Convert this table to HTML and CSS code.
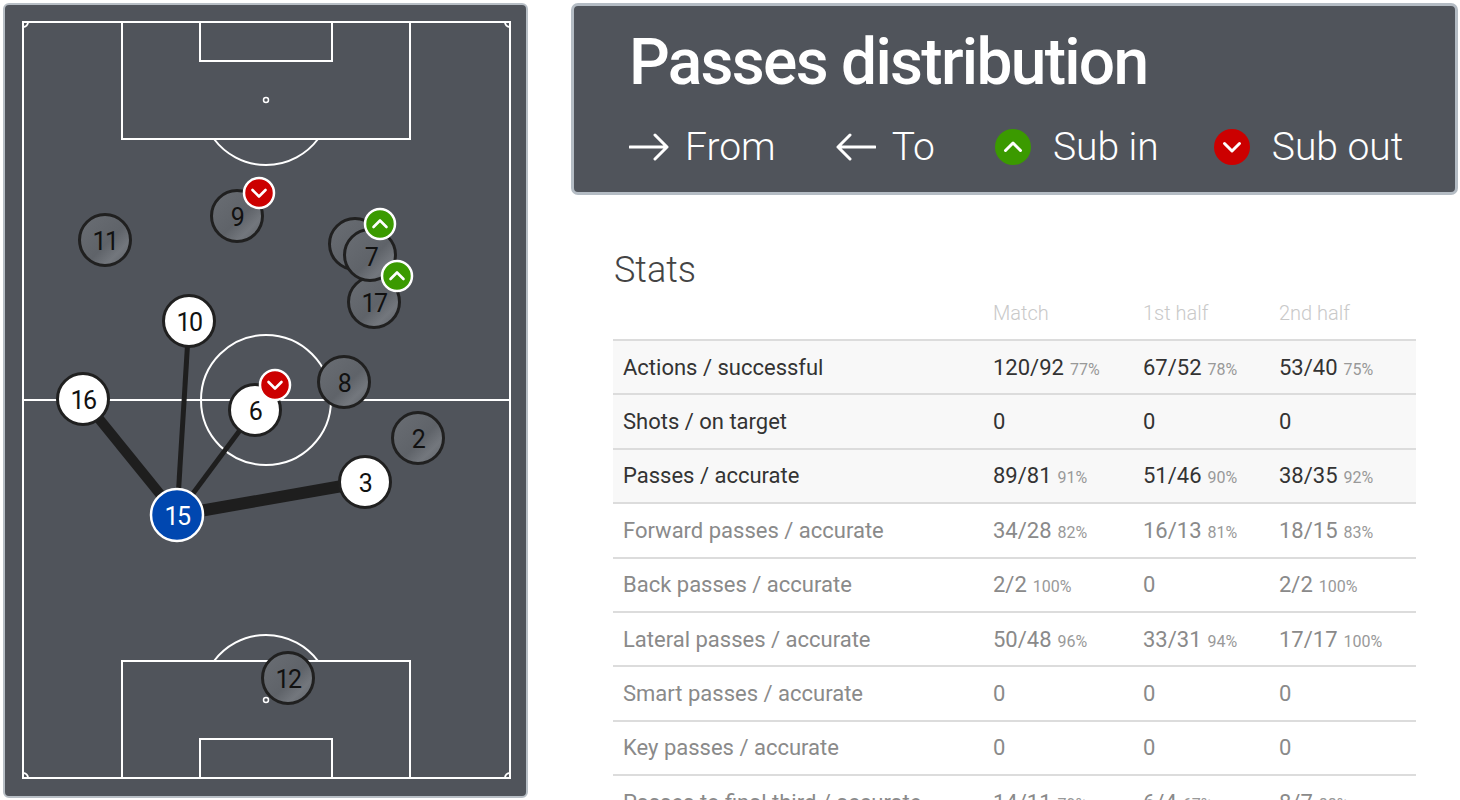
FILE: index.html
```html
<!DOCTYPE html>
<html lang="en">
<head>
<meta charset="utf-8">
<title>Passes distribution</title>
<link rel="stylesheet" href="styles.css">
</head>
<body>
<div class="page">
  <div class="pitch-panel">
    <svg class="pitch" width="521" height="791" viewBox="5 5 521 791" xmlns="http://www.w3.org/2000/svg">
      <defs>
        <linearGradient id="grayfill" x1="0" y1="0" x2="1" y2="1">
          <stop offset="0" stop-color="#6a6e74"/>
          <stop offset="0.55" stop-color="#5f6369"/>
          <stop offset="0.75" stop-color="#73777d"/>
          <stop offset="1" stop-color="#5c6066"/>
        </linearGradient>
      </defs>
      <g class="lines">
        <rect x="23" y="22" width="487" height="756"/>
        <line x1="23" y1="400" x2="510" y2="400"/>
        <circle cx="266" cy="400" r="65"/>
        <rect x="122" y="22" width="288" height="117"/>
        <rect x="200" y="22" width="132" height="39"/>
        <path d="M214 139 A65 65 0 0 0 318 139"/>
        <circle class="spot" cx="266" cy="100" r="2.5"/>
        <rect x="122" y="661" width="288" height="117"/>
        <rect x="200" y="739" width="132" height="39"/>
        <path d="M214 661 A65 65 0 0 1 318 661"/>
        <circle class="spot" cx="266" cy="700" r="2.5"/>
        <path d="M23 27 A5 5 0 0 0 28 22"/>
        <path d="M505 22 A5 5 0 0 0 510 27"/>
        <path d="M23 773 A5 5 0 0 1 28 778"/>
        <path d="M505 778 A5 5 0 0 1 510 773"/>
      </g>
      <g class="passes">
        <line x1="177" y1="515" x2="83" y2="399" stroke-width="10"/>
        <line x1="177" y1="515" x2="189" y2="321" stroke-width="5"/>
        <line x1="177" y1="515" x2="255" y2="410" stroke-width="5"/>
        <line x1="177" y1="515" x2="365" y2="482" stroke-width="12"/>
      </g>
      <g class="node gray"><circle cx="105" cy="240" r="25.5"/><text x="105" y="241">11</text></g>
      <g class="node gray"><circle cx="237" cy="216" r="25.5"/><text x="237" y="217">9</text></g>
      <g class="node gray"><circle cx="355" cy="244" r="25.5"/></g>
      <g class="node gray"><circle cx="374" cy="302" r="25.5"/><text x="374" y="303">17</text></g>
      <g class="node gray"><circle cx="370" cy="255" r="25.5"/><text x="371" y="257">7</text></g>
      <g class="node gray"><circle cx="344" cy="382" r="25.5"/><text x="344" y="383">8</text></g>
      <g class="node gray"><circle cx="418" cy="438" r="25.5"/><text x="418" y="439">2</text></g>
      <g class="node gray"><circle cx="288" cy="678" r="25.5"/><text x="288" y="679">12</text></g>
      <g class="node white"><circle cx="189" cy="321" r="25.5"/><text x="189" y="322">10</text></g>
      <g class="node white"><circle cx="83" cy="399" r="25.5"/><text x="83" y="400">16</text></g>
      <g class="node white"><circle cx="255" cy="410" r="25.5"/><text x="255" y="411">6</text></g>
      <g class="node white"><circle cx="365" cy="482" r="25.5"/><text x="365" y="483">3</text></g>
      <g class="node blue"><circle cx="177" cy="515" r="26"/><text x="177" y="516">15</text></g>
      <g class="badge out" transform="translate(259 193)"><circle r="15"/><path d="M-6.5 -3 L0 3.5 L6.5 -3"/></g>
      <g class="badge out" transform="translate(275 385)"><circle r="15"/><path d="M-6.5 -3 L0 3.5 L6.5 -3"/></g>
      <g class="badge in" transform="translate(380 224)"><circle r="15"/><path d="M-6.5 3 L0 -3.5 L6.5 3"/></g>
      <g class="badge in" transform="translate(397 276)"><circle r="15"/><path d="M-6.5 3 L0 -3.5 L6.5 3"/></g>
    </svg>
  </div>

  <div class="right">
    <div class="header">
      <h1 class="title">Passes distribution</h1>
      <div class="legend">
        <div class="legend-item">
          <svg class="arrow" width="40" height="28" viewBox="0 0 40 28"><path d="M1 14 H38 M26 2 L38 14 L26 26"/></svg>
          <span>From</span>
        </div>
        <div class="legend-item">
          <svg class="arrow" width="40" height="28" viewBox="0 0 40 28"><path d="M39 14 H2 M14 2 L2 14 L14 26"/></svg>
          <span>To</span>
        </div>
        <div class="legend-item sub">
          <svg class="dot" width="36" height="36" viewBox="-18 -18 36 36"><circle class="in-fill" r="18"/><path d="M-7.5 3.5 L0 -4 L7.5 3.5"/></svg>
          <span>Sub in</span>
        </div>
        <div class="legend-item sub last">
          <svg class="dot" width="36" height="36" viewBox="-18 -18 36 36"><circle class="out-fill" r="18"/><path d="M-7.5 -3.5 L0 4 L7.5 -3.5"/></svg>
          <span>Sub out</span>
        </div>
      </div>
    </div>

    <div class="stats">
      <h2 class="stats-title">Stats</h2>
      <div class="table">
        <div class="row head">
          <div></div><div>Match</div><div>1st half</div><div>2nd half</div>
        </div>
        <div class="row strong">
          <div class="label">Actions / successful</div>
          <div class="val">120/92<span class="pct">77%</span></div>
          <div class="val">67/52<span class="pct">78%</span></div>
          <div class="val">53/40<span class="pct">75%</span></div>
        </div>
        <div class="row strong">
          <div class="label">Shots / on target</div>
          <div class="val">0</div>
          <div class="val">0</div>
          <div class="val">0</div>
        </div>
        <div class="row strong">
          <div class="label">Passes / accurate</div>
          <div class="val">89/81<span class="pct">91%</span></div>
          <div class="val">51/46<span class="pct">90%</span></div>
          <div class="val">38/35<span class="pct">92%</span></div>
        </div>
        <div class="row">
          <div class="label">Forward passes / accurate</div>
          <div class="val">34/28<span class="pct">82%</span></div>
          <div class="val">16/13<span class="pct">81%</span></div>
          <div class="val">18/15<span class="pct">83%</span></div>
        </div>
        <div class="row">
          <div class="label">Back passes / accurate</div>
          <div class="val">2/2<span class="pct">100%</span></div>
          <div class="val">0</div>
          <div class="val">2/2<span class="pct">100%</span></div>
        </div>
        <div class="row">
          <div class="label">Lateral passes / accurate</div>
          <div class="val">50/48<span class="pct">96%</span></div>
          <div class="val">33/31<span class="pct">94%</span></div>
          <div class="val">17/17<span class="pct">100%</span></div>
        </div>
        <div class="row">
          <div class="label">Smart passes / accurate</div>
          <div class="val">0</div>
          <div class="val">0</div>
          <div class="val">0</div>
        </div>
        <div class="row">
          <div class="label">Key passes / accurate</div>
          <div class="val">0</div>
          <div class="val">0</div>
          <div class="val">0</div>
        </div>
        <div class="row">
          <div class="label">Passes to final third / accurate</div>
          <div class="val">14/11<span class="pct">79%</span></div>
          <div class="val">6/4<span class="pct">67%</span></div>
          <div class="val">8/7<span class="pct">88%</span></div>
        </div>
      </div>
    </div>
  </div>
</div>
</body>
</html>
```
FILE: styles.css
```css
html, body {
  margin: 0;
  padding: 0;
  background: #ffffff;
  font-family: Roboto, "Noto Sans", "Liberation Sans", sans-serif;
}

body {
  height: 800px;
  overflow: hidden;
}

.page {
  display: flex;
  align-items: flex-start;
  gap: 43px;
  padding: 3px 0 0 3px;
}

/* ---------- Pitch ---------- */
.pitch-panel {
  flex: none;
  width: 525px;
  height: 795px;
  box-sizing: border-box;
  border: 2px solid #b8bfc6;
  border-radius: 6px;
  background: #50545b;
  overflow: hidden;
}

.pitch {
  display: block;
}

.lines rect,
.lines line,
.lines circle,
.lines path {
  fill: none;
  stroke: #ffffff;
  stroke-width: 2;
}

.lines .spot {
  fill: #50545b;
  stroke-width: 1.5;
}

.passes line {
  stroke: #1e1e1e;
  stroke-linecap: butt;
}

.node circle {
  stroke: #202020;
  stroke-width: 3;
}

.node.gray circle {
  fill: url(#grayfill);
}

.node.white circle {
  fill: #ffffff;
}

.node.blue circle {
  fill: #0047b0;
  stroke: #ffffff;
  stroke-width: 2.5;
}

.node text {
  font-family: Roboto, "Noto Sans", sans-serif;
  font-size: 25px;
  letter-spacing: -1.5px;
  text-anchor: middle;
  dominant-baseline: central;
  fill: #111111;
}

.node.blue text {
  fill: #ffffff;
}

.badge circle {
  stroke: #ffffff;
  stroke-width: 2.5;
}

.badge.out circle {
  fill: #cc0000;
}

.badge.in circle {
  fill: #3b9a00;
}

.badge path {
  fill: none;
  stroke: #ffffff;
  stroke-width: 2.6;
  stroke-linecap: round;
  stroke-linejoin: round;
}

/* ---------- Right column ---------- */
.right {
  flex: none;
  width: 887px;
}

.header {
  box-sizing: border-box;
  height: 192px;
  border: 3px solid #b4bcc4;
  border-radius: 7px;
  background: #50545b;
  padding: 25px 0 0 55px;
  color: #ffffff;
}

.title {
  margin: 0;
  font-size: 64px;
  line-height: 64px;
  font-weight: 500;
  letter-spacing: -1.7px;
}

.legend {
  display: flex;
  align-items: center;
  gap: 60px;
  margin-top: 32px;
  height: 40px;
}

.legend-item {
  display: flex;
  align-items: center;
  gap: 16px;
  font-size: 39px;
  font-weight: 300;
  line-height: 40px;
}

.legend-item.sub {
  gap: 22px;
}

.legend-item.last {
  margin-left: -5px;
}

.legend-item svg {
  display: block;
  flex: none;
}

.arrow path {
  fill: none;
  stroke: #ffffff;
  stroke-width: 3;
  stroke-linecap: round;
  stroke-linejoin: round;
}

.dot .in-fill {
  fill: #3b9a00;
}

.dot .out-fill {
  fill: #cc0000;
}

.dot path {
  fill: none;
  stroke: #ffffff;
  stroke-width: 3;
  stroke-linecap: round;
  stroke-linejoin: round;
}

/* ---------- Stats ---------- */
.stats {
  padding: 55px 0 0 42px;
  width: 803px;
}

.stats-title {
  margin: 0;
  font-size: 36px;
  line-height: 40px;
  font-weight: 300;
  color: #444444;
  padding-left: 1px;
}

.table {
  display: flex;
  flex-direction: column;
}

.row {
  display: grid;
  grid-template-columns: 380px 150px 136px 1fr;
  align-items: center;
  box-sizing: border-box;
  height: 54.4px;
  border-top: 2px solid #dcdcdc;
  color: #8a8a8a;
  font-size: 22px;
  font-weight: 400;
}

.row.head {
  height: 49px;
  padding-bottom: 3px;
  border-top: none;
  font-size: 20px;
  font-weight: 300;
  color: #c9c9c9;
}

.row.strong {
  background: #f8f8f8;
  color: #333333;
}

.label {
  padding-left: 10px;
  white-space: nowrap;
}

.val {
  white-space: nowrap;
}

.pct {
  margin-left: 6px;
  font-size: 16px;
  color: #999999;
}
```
